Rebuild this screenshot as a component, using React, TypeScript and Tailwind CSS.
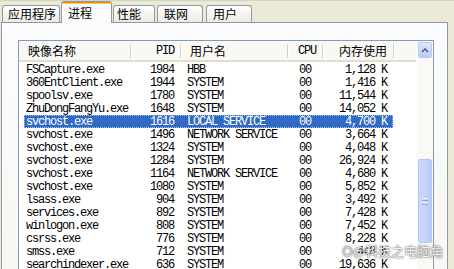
import React from "react";

/* ===== Types ===== */
type Proc = {
  name: string;
  pid: string;
  user: string;
  cpu: string;
  mem: string;
  selected?: boolean;
};

const ROWS: Proc[] = [
  { name: "FSCapture.exe", pid: "1984", user: "HBB", cpu: "00", mem: "1,128 K" },
  { name: "360EntClient.exe", pid: "1944", user: "SYSTEM", cpu: "00", mem: "1,416 K" },
  { name: "spoolsv.exe", pid: "1780", user: "SYSTEM", cpu: "00", mem: "11,544 K" },
  { name: "ZhuDongFangYu.exe", pid: "1648", user: "SYSTEM", cpu: "00", mem: "14,052 K" },
  { name: "svchost.exe", pid: "1616", user: "LOCAL SERVICE", cpu: "00", mem: "4,700 K", selected: true },
  { name: "svchost.exe", pid: "1496", user: "NETWORK SERVICE", cpu: "00", mem: "3,664 K" },
  { name: "svchost.exe", pid: "1324", user: "SYSTEM", cpu: "00", mem: "4,048 K" },
  { name: "svchost.exe", pid: "1284", user: "SYSTEM", cpu: "00", mem: "26,924 K" },
  { name: "svchost.exe", pid: "1164", user: "NETWORK SERVICE", cpu: "00", mem: "4,680 K" },
  { name: "svchost.exe", pid: "1080", user: "SYSTEM", cpu: "00", mem: "5,852 K" },
  { name: "lsass.exe", pid: "904", user: "SYSTEM", cpu: "00", mem: "3,492 K" },
  { name: "services.exe", pid: "892", user: "SYSTEM", cpu: "00", mem: "7,428 K" },
  { name: "winlogon.exe", pid: "808", user: "SYSTEM", cpu: "00", mem: "7,452 K" },
  { name: "csrss.exe", pid: "776", user: "SYSTEM", cpu: "00", mem: "8,228 K" },
  { name: "smss.exe", pid: "712", user: "SYSTEM", cpu: "00", mem: "448 K" },
  { name: "searchindexer.exe", pid: "636", user: "SYSTEM", cpu: "00", mem: "19,636 K" },
];

const CJK = "font-['SimSun','Noto_Sans_CJK_SC',sans-serif]";
const MONO = "font-['Liberation_Mono',monospace] text-[12px] tracking-[-1.2px]";

function Sep() {
  return (
    <div className="flex h-[14px] self-center">
      <div className="w-px bg-[#D6D2C2]" />
      <div className="w-px bg-white" />
    </div>
  );
}

export default function App() {
  return (
    <div className={`relative w-[454px] h-[269px] overflow-hidden bg-[#ECE9D8] border-t border-[#D8D4C4] flex flex-col ${CJK}`}>
      {/* Tabs */}
      <div className="flex items-end h-[21px] pl-[2px] text-[12px] leading-none text-black">
        <div className="w-[58px] h-[17px] border border-b-0 border-[#919B9C] rounded-t-[3px] bg-gradient-to-b from-white to-[#ECEBE6] pl-[5px] pt-[2px]">
          应用程序
        </div>
        <div className="relative z-10 -mb-px ml-px w-[51px] h-[22px] border border-b-0 border-[#919B9C] rounded-t-[3px] bg-[#FCFCFE] pl-[6px] pt-[5px] overflow-hidden">
          <div className="absolute left-0 right-0 top-0 h-[2px] bg-[#FFC83C]" />
          <div className="absolute left-0 right-0 top-0 h-px bg-[#E68B2C]" />
          进程
        </div>
        <div className="ml-px w-[42px] h-[17px] border border-b-0 border-[#919B9C] rounded-t-[3px] bg-gradient-to-b from-white to-[#ECEBE6] pl-[3px] pt-[2px]">
          性能
        </div>
        <div className="ml-[2px] w-[46px] h-[17px] border border-b-0 border-[#919B9C] rounded-t-[3px] bg-gradient-to-b from-white to-[#ECEBE6] pl-[6px] pt-[2px]">
          联网
        </div>
        <div className="ml-[3px] w-[46px] h-[17px] border border-b-0 border-[#919B9C] rounded-t-[3px] bg-gradient-to-b from-white to-[#ECEBE6] pl-[6px] pt-[2px]">
          用户
        </div>
      </div>

      {/* Panel */}
      <div className="ml-px w-[447px] flex-1 border border-b-0 border-[#919B9C] bg-gradient-to-b from-[#FCFCFE] to-[#F4F3EE] pl-[16px] pt-[17px]">
        <div className="w-[416px] h-[400px] border border-[#7F9DB9] bg-white flex">
          {/* list */}
          <div className="w-[398px] flex flex-col">
            {/* header */}
            <div className="h-[21px] flex bg-[#F8F8F4] border-b-2 border-[#E2DECD] text-[12px] leading-none">
              <div className="w-[111px] flex items-center pl-[9px]">映像名称</div>
              <Sep />
              <div className={`w-[48px] flex items-center justify-end pr-[6px] ${MONO}`}>PID</div>
              <Sep />
              <div className="w-[105px] flex items-center pl-[8px]">用户名</div>
              <Sep />
              <div className={`w-[33px] flex items-center pl-[9px] ${MONO}`}>CPU</div>
              <Sep />
              <div className="w-[69px] flex items-center justify-end pr-[6px]">内存使用</div>
              <Sep />
            </div>
            {/* rows */}
            <div className={`flex flex-col pt-px ${MONO}`}>
              {ROWS.map((r, i) => (
                <div key={i} className="h-[13px] flex items-center pl-[5px]">
                  <div
                    className={`w-[369px] h-full flex items-center leading-none ${
                      r.selected
                        ? "bg-[#316AC5] text-white outline-1 outline-dotted outline-[#A9BEE6] -outline-offset-1"
                        : "text-black"
                    }`}
                  >
                    <div className="w-[106px] pl-[2px] whitespace-nowrap">{r.name}</div>
                    <div className="w-[44px] text-right">{r.pid}</div>
                    <div className="w-[113px] pl-[13px] whitespace-nowrap">{r.user}</div>
                    <div className="w-[35px] pl-[12px]">{r.cpu}</div>
                    <div className="w-[65px] text-right">{r.mem}</div>
                  </div>
                </div>
              ))}
            </div>
          </div>

          {/* scrollbar */}
          <div className="w-[16px] ml-px flex flex-col bg-[#FAF9F5]">
            <div className="h-[16px] m-px rounded-[2px] border border-[#B8CAF5] bg-gradient-to-b from-[#DCE6FD] to-[#B9CCF8] flex items-center justify-center">
              <svg width="8" height="5" viewBox="0 0 8 5">
                <path d="M1 4 L4 1 L7 4" fill="none" stroke="#4D6185" strokeWidth="1.6" />
              </svg>
            </div>
            <div className="h-[100px]" />
            <div className="h-[84px] mx-px rounded-[2px] border border-[#B4C8F6] bg-gradient-to-r from-[#C9D8FC] via-[#C4D5FB] to-[#B6CAF7] flex flex-col items-center justify-center gap-px">
              <div className="w-[6px] h-px bg-[#EEF3FE]" />
              <div className="w-[6px] h-px bg-[#8CA8E6]" />
              <div className="w-[6px] h-px bg-[#EEF3FE]" />
              <div className="w-[6px] h-px bg-[#8CA8E6]" />
            </div>
          </div>
        </div>
      </div>

      {/* Watermark */}
      <div className="absolute left-[342px] top-[243px] text-[13px] leading-none text-white/90 [text-shadow:0_0_2px_#666,0_0_1px_#555] whitespace-nowrap">
        <span className="text-[11px] text-[#d0d0d0]">◎</span>@科技之电脑角
      </div>
    </div>
  );
}
